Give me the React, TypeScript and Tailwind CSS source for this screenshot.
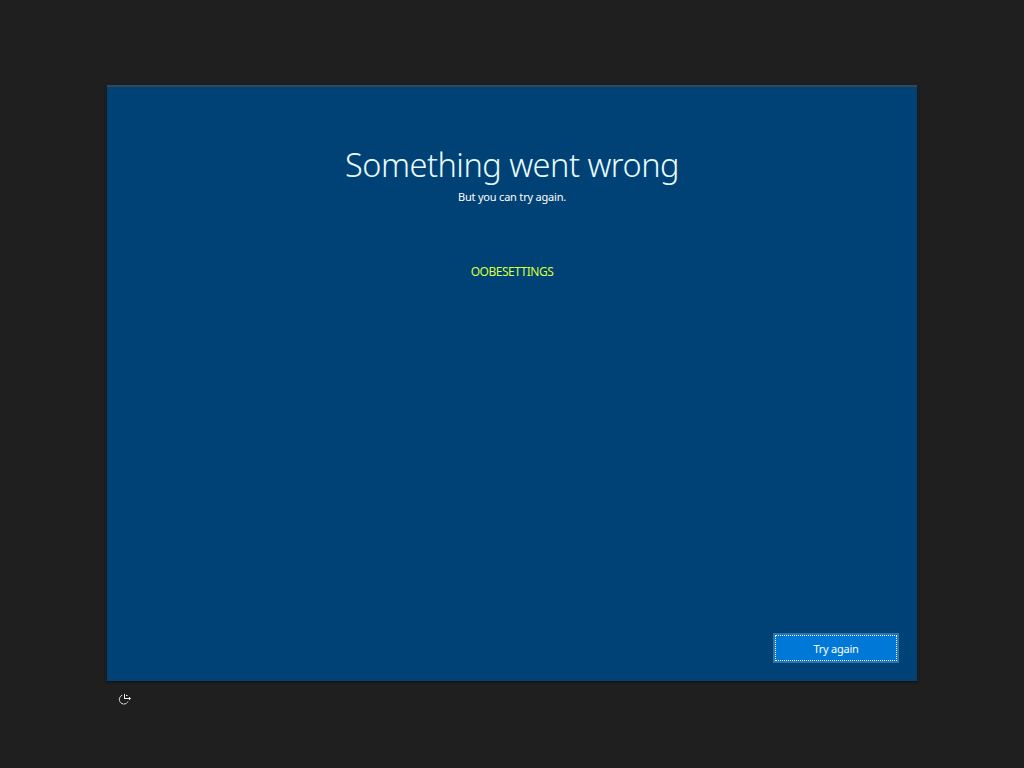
export default function App() {
  return (
    <div className="flex h-screen w-screen flex-col overflow-hidden bg-[#1f1f1f] px-[107px] pt-[85px] font-['Noto_Sans','Open_Sans',sans-serif] text-white">
      <main className="flex h-[596px] w-[810px] shrink-0 flex-col items-center border-t-2 border-[#2f4a5c] bg-[#004275] shadow-[0_1px_2px_#111]">
        <h1 className="mt-[54px] h-[48px] whitespace-nowrap text-[32.5px] leading-[48px] font-light tracking-[-0.5px] text-[#e8fbff]">
          Something went wrong
        </h1>
        <p className="h-4 whitespace-nowrap text-[11px] leading-4 tracking-[-0.2px]">But you can try again.</p>
        <p className="mt-[59px] h-4 whitespace-nowrap text-[12px] leading-4 tracking-[-0.5px] text-[#d8ff3c]">OOBESETTINGS</p>
        <button className="mt-auto mr-[18px] mb-[18px] flex h-[30px] w-[126px] items-stretch self-end bg-[#2b73b2] p-[2px] text-[11px] tracking-[-0.25px]">
          <span className="flex flex-1 items-center justify-center border border-dotted border-white bg-[#0078d7] pt-[3px]">Try again</span>
        </button>
      </main>
      <svg className="mt-[11px] ml-[10px] h-[14px] w-[16px]" viewBox="0 0 16 14" fill="none" stroke="#eeeeee" strokeWidth="1">
        <path d="M5.2 3.2A4.6 4.6 0 1 0 11 9.6" strokeDasharray="2.6 0.4" />
        <path d="M7.5 2v5M7 6.5h6.5M12 5l1.5 1.5L12 8M9 3.5h1.5" />
      </svg>
    </div>
  );
}
